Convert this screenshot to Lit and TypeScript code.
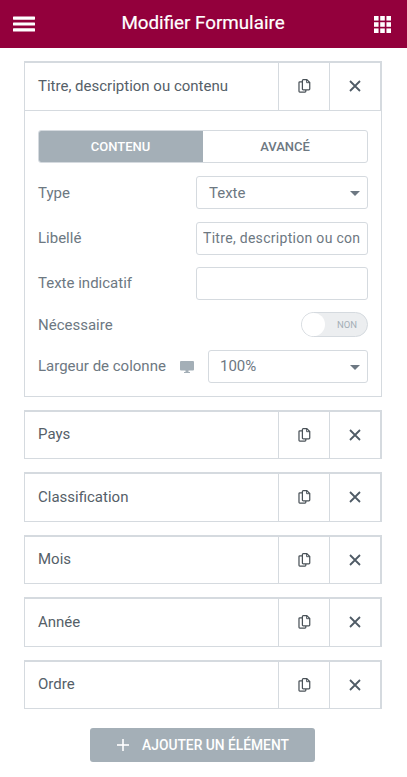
import { LitElement, html, css, svg } from "lit";
import { customElement } from "lit/decorators.js";

const copyIcon = html`<svg class="ic" width="13" height="14" viewBox="0 0 14 16" fill="none" stroke="#495157" stroke-width="1.4"><path d="M4.6 3.2H1.7a1 1 0 0 0-1 1v9.9a1 1 0 0 0 1 1h5.8a1 1 0 0 0 1-1v-1.600"/><path d="M4.6 1.7a1 1 0 0 1 1-1h4l3.4 3.4v7.4a1 1 0 0 1-1 1H5.6a1 1 0 0 1-1-1z"/><path d="M9.4 .8v3.4h3.6" stroke-width="1.1"/></svg>`;
const closeIcon = html`<svg width="12" height="12" viewBox="0 0 12 12" stroke="#4f5b66" stroke-width="1.8"><path d="M1 1l10 10M11 1L1 11"/></svg>`;
const caret = html`<svg class="caret" width="10" height="5" viewBox="0 0 10 5"><path d="M0 0h10L5 5z" fill="#6d7882"/></svg>`;

@customElement("app-root")
export class AppRoot extends LitElement {
  static styles = css`
    :host { display: block; width: 407px; height: 777px; background: #fff; font-family: Roboto, "Liberation Sans", sans-serif; color: #6d7882; overflow: hidden; }
    * { box-sizing: border-box; }
    header { height: 48px; background: #93003c; color: #fff; display: flex; align-items: center; justify-content: space-between; padding: 0 16px 0 13px; }
    header h1 { margin: 0 3px 2px 0; font-size: 18.8px; font-weight: 400; line-height: 46px; -webkit-text-stroke: .2px #fff; }
    header svg { display: block; }
    main { padding: 13px 25px 0 24px; }
    .item { margin-bottom: 13px; }
    .row { height: 49.5px; display: flex; background: #fff; border: 1px solid #d5dadf; border-top-width: 2px; border-right-width: 2px; }
    .title { flex: 1; display: flex; align-items: center; padding-left: 13px; font-size: 15px; color: #556068; padding-bottom: 1px; }
    .btn { width: 51px; display: flex; align-items: center; justify-content: center; border-left: 1px solid #d5dadf; }
    .panel { height: 286px; border: 1px solid #d5dadf; border-top: 0; padding: 19px 13px 0 13px; display: flex; flex-direction: column; }
    .tabs { display: flex; flex: none; height: 33px; border: 1px solid #d5dadf; border-radius: 3px; overflow: hidden; font-size: 13px; font-weight: 500; }
    .tab { width: 50%; display: flex; align-items: center; justify-content: center; color: #6d7882; }
    .tab.on { background: #a4afb7; color: #fff; margin: -1px 0 -1px -1px; width: calc(50% + 1px); }
    .field { display: flex; flex: none; align-items: center; justify-content: space-between; font-size: 15px; color: #6d7882; }
    .gap-13 { margin-top: 13.5px; }
    .gap-12 { margin-top: 12px; }
    .gap-125 { margin-top: 12.5px; }
    .nudge-down { padding-top: 2px; }
    .nudge-up { padding-bottom: 2px; }
    .ctl { width: 172px; height: 33px; border: 1px solid #d5dadf; border-radius: 3px; display: flex; align-items: center; justify-content: space-between; font-size: 15px; color: #6d7882; padding: 0 7px 0 12px; }
    .ctl.input { padding: 0 7px 0 6px; }
    .clip { overflow: hidden; white-space: nowrap; letter-spacing: .3px; font-size: 14px; width: 100%; }
    .ctl.narrow { width: 160px; padding-left: 11px; padding-bottom: 2px; }
    .ctl.narrow .caret { margin-top: 3px; }
    .lblgroup { display: flex; align-items: center; gap: 14px; }
    .caret { display: block; margin-top: 1px; }
    .toggle { position: relative; width: 67px; height: 25px; border-radius: 13px; background: #eceef0; border: 1px solid #d5dadf; font-size: 9.5px; color: #a4afb7; display: flex; align-items: center; justify-content: flex-end; padding-right: 10px; }
    .knob { position: absolute; left: 0; top: 0; width: 23px; height: 23px; border-radius: 50%; background: #fff; }
    .add { width: 225px; height: 34px; margin: 19px 0 0 66px; background: #a4afb7; color: #fff; border-radius: 3px; display: flex; align-items: center; justify-content: center; gap: 13px; font-size: 13.8px; font-weight: 500; padding-left: 1px; }
    .add svg { display: block; }
  `;

  row(t: string) {
    return html`<div class="row"><div class="title">${t}</div><div class="btn">${copyIcon}</div><div class="btn">${closeIcon}</div></div>`;
  }

  render() {
    const grid = [0, 1, 2].flatMap((y) => [0, 1, 2].map((x) => svg`<rect x=${x * 6} y=${y * 6} width="4.4" height="4.4"/>`));
    return html`
      <header>
        <svg width="22" height="16" viewBox="0 0 22 16" fill="#fff"><rect y="0.500" width="22" height="3.200" rx=".6"/><rect y="6.400" width="22" height="3.200" rx=".6"/><rect y="12.300" width="22" height="3.200" rx=".6"/></svg>
        <h1>Modifier Formulaire</h1>
        <svg width="17" height="17" viewBox="0 0 16.4 16.4" fill="#fff">${grid}</svg>
      </header>
      <main>
        <div class="item">
          ${this.row("Titre, description ou contenu")}
          <div class="panel">
            <div class="tabs"><div class="tab on">CONTENU</div><div class="tab">AVANCÉ</div></div>
            <div class="field gap-13"><span>Type</span><div class="ctl">Texte ${caret}</div></div>
            <div class="field gap-125"><span>Libellé</span><div class="ctl input"><div class="clip">Titre, description ou contenu</div></div></div>
            <div class="field gap-12"><span>Texte indicatif</span><div class="ctl"></div></div>
            <div class="field gap-12"><span class="nudge-down">Nécessaire</span><div class="toggle"><div class="knob"></div>NON</div></div>
            <div class="field gap-13">
              <div class="lblgroup"><span class="nudge-up">Largeur de colonne</span>
                <svg width="14" height="12" viewBox="0 0 14 12" fill="#a4afb7"><path d="M0 1a1 1 0 0 1 1-1h12a1 1 0 0 1 1 1v7.500a1 1 0 0 1-1 1H8.500V11H10v1H4v-1h1.500V9.500H1a1 1 0 0 1-1-1z"/></svg>
              </div>
              <div class="ctl narrow">100% ${caret}</div>
            </div>
          </div>
        </div>
        ${["Pays", "Classification", "Mois", "Année", "Ordre"].map((t) => html`<div class="item">${this.row(t)}</div>`)}
        <div class="add">
          <svg width="12" height="12" viewBox="0 0 12 12" fill="#fff"><rect y="5.200" width="12" height="1.600"/><rect x="5.200" width="1.600" height="12"/></svg>
          <span>AJOUTER UN ÉLÉMENT</span>
        </div>
      </main>
    `;
  }
}
